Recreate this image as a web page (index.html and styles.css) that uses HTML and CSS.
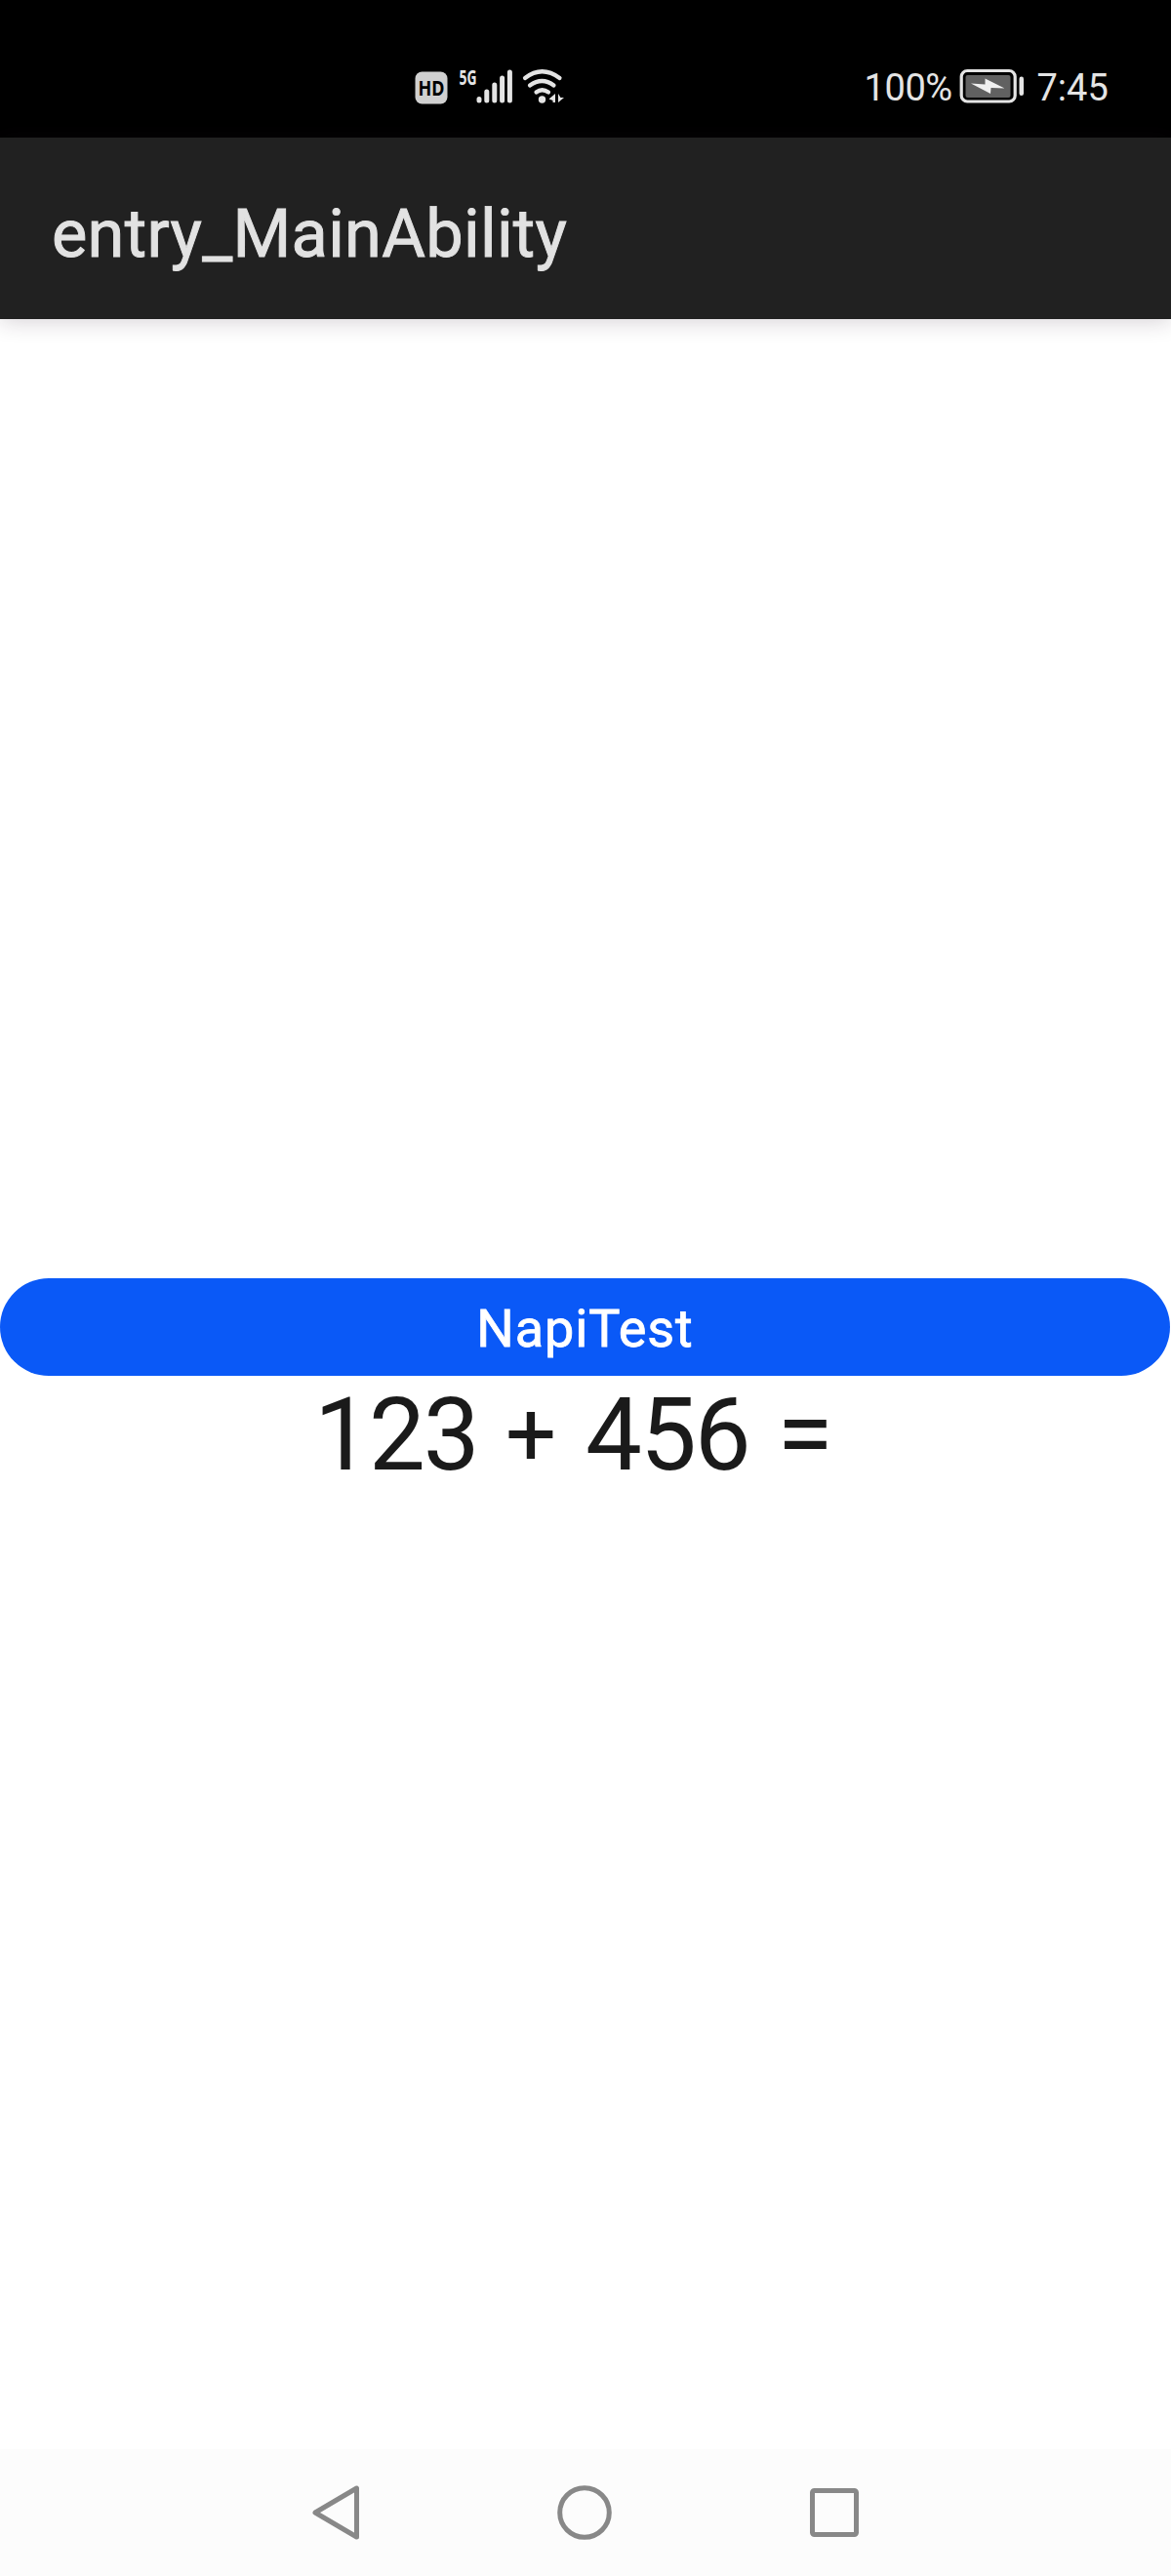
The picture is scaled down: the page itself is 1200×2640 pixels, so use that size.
FILE: index.html
```html
<!DOCTYPE html>
<html lang="en">
<head>
<meta charset="utf-8">
<title>entry_MainAbility</title>
<link rel="stylesheet" href="styles.css">
</head>
<body>
<div class="screen">
  <header class="status-bar">
    <svg class="signals" width="180" height="80" viewBox="0 0 180 80">
      <rect x="15.5" y="23.5" width="33" height="33" rx="7" fill="#d0d0d0"/>
      <text class="hd" x="18.500" y="48" textLength="27" lengthAdjust="spacingAndGlyphs">HD</text>
      <text class="five-g" x="60.5" y="36.5" textLength="18" lengthAdjust="spacingAndGlyphs">5G</text>
      <g stroke="#e4e4e4" stroke-width="5" stroke-linecap="round">
        <path d="M81 51.5V53M88.8 44V53M96.8 37V53M104.6 30V53M112.4 24V53"/>
      </g>
      <g fill="none" stroke="#e4e4e4" stroke-width="4.2" stroke-linecap="round">
        <path d="M128 30Q145.500 16.500 163.500 30M133 37.500Q145.500 28.500 157.500 37.500M139.500 44.500Q145.500 40 152 44.500"/>
      </g>
      <circle cx="145.500" cy="52" r="3.700" fill="#e4e4e4"/>
      <path d="M159 46V55H156.500V53L152.500 51.500ZM162 46V55L168 50H164.500Z" fill="#e4e4e4"/>
    </svg>
    <div class="power">
      <span class="percent">100%</span>
      <svg class="battery" width="68" height="36" viewBox="0 0 68 36">
        <rect x="2.200" y="2.500" width="55" height="31.500" rx="6" fill="none" stroke="#e4e4e4" stroke-width="3.200"/>
        <rect x="6.500" y="7" width="46" height="23" rx="2" fill="#616161"/>
        <path d="M26.500 10.500L46.500 20.500L32.500 20L32 26L12 15.500L26.500 16.500Z" fill="#f0f0f0"/>
        <rect x="61.500" y="8.500" width="4.500" height="19.500" rx="2.200" fill="#e4e4e4"/>
      </svg>
      <span class="clock">7:45</span>
    </div>
  </header>
  <div class="app-bar"><h1 class="title">entry_MainAbility</h1></div>
  <main class="content">
    <button class="napi-button">NapiTest</button>
    <p class="result"><span class="operand">123</span><span class="operator">+</span><span class="operand second">456</span><span class="operator equals">=</span></p>
  </main>
  <nav class="nav-bar">
    <svg width="56" height="60" viewBox="0 0 56 60"><path d="M49.500 5V55L7 30Z"/></svg>
    <svg width="60" height="60" viewBox="0 0 60 60"><circle cx="30" cy="30" r="25.300"/></svg>
    <svg width="60" height="60" viewBox="0 0 60 60"><rect x="7.500" y="7.500" width="45" height="45" rx="2"/></svg>
  </nav>
</div>
</body>
</html>
```
FILE: styles.css
```css
* { box-sizing: border-box; }
body { margin: 0; background: #fff; }
.screen {
  display: flex;
  flex-direction: column;
  width: 1200px;
  height: 2640px;
  font-family: Roboto, "Noto Sans", sans-serif;
}
.status-bar {
  display: flex;
  justify-content: space-between;
  height: 141px;
  padding: 50px 65.5px 0 410px;
  background: #000;
  color: #e4e4e4;
}
.hd { font: 700 21px "Noto Sans", sans-serif; fill: #000; }
.five-g { font: 700 22px "Noto Sans", sans-serif; fill: #e4e4e4; }
.power { display: flex; height: 80px; font-size: 38px; line-height: 80px; }
.percent { width: 97px; letter-spacing: -0.4px; }
.battery { margin-top: 20px; width: 68px; }
.clock { width: 84px; padding-left: 12px; white-space: nowrap; }
.app-bar {
  display: flex;
  align-items: center;
  height: 186px;
  padding: 11px 53px 0;
  background: #212121;
  box-shadow: 0 2px 22px rgba(40, 20, 40, 0.2);
}
.title {
  margin: 0;
  color: #e2e2e2;
  font: 400 68.5px/80px Roboto, sans-serif;
  letter-spacing: 0.3px;
  -webkit-text-stroke: 0.9px #e2e2e2;
}
.content {
  display: flex;
  flex: 1;
  flex-direction: column;
  justify-content: center;
}
.napi-button {
  width: 1199px;
  height: 100px;
  padding: 4px 0 0;
  border: 0;
  border-radius: 50px;
  background: #0a59f7;
  color: #fff;
  font: 400 54px/96px Roboto, sans-serif;
  letter-spacing: 0.9px;
  -webkit-text-stroke: 0.8px #fff;
}
.result {
  display: flex;
  gap: 28px;
  height: 117px;
  margin: 0;
  padding-left: 322px;
  color: #1a1a1a;
  font-size: 103px;
  line-height: 121px;
}
.operand { width: 170px; letter-spacing: -2px; }
.second { width: 174px; padding-left: 4px; }
.operator {
  display: flex;
  justify-content: center;
  width: 48px;
  font-size: 92px;
}
.equals { width: 54px; font-size: 105px; }
.nav-bar {
  display: flex;
  justify-content: space-between;
  height: 130px;
  padding: 35px 315px 0 316px;
  background: #fcfcfc;
}
.nav-bar svg { fill: none; stroke: #888; stroke-width: 5; stroke-linejoin: round; }
```
